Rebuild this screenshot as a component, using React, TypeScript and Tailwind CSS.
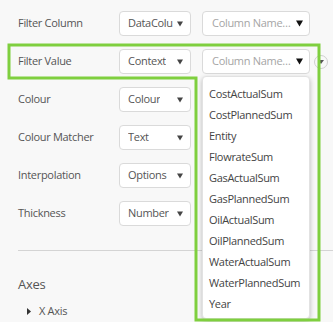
import React from 'react';

const font = { fontFamily: '"Open Sans", "Noto Sans", sans-serif' };

function Caret({ dark }: { dark?: boolean }) {
  return dark ? (
    <svg width="7" height="7" viewBox="0 0 7 7" className="shrink-0">
      <path d="M0 0.5 H7 L3.5 6.5 Z" fill="#111" />
    </svg>
  ) : (
    <svg width="6" height="6" viewBox="0 0 6 6" className="shrink-0">
      <path d="M0 0.5 H6 L3 5.5 Z" fill="#444" />
    </svg>
  );
}

function Select({ value, wide, placeholder }: { value: string; wide?: boolean; placeholder?: boolean }) {
  return (
    <div
      className={`flex h-[25px] items-center justify-between rounded-[4px] border border-[#dadada] bg-white ${
        wide ? 'w-[108px] pl-[9px] pr-[6px]' : 'w-[72px] pl-[8px] pr-[7px]'
      }`}
    >
      <span
        className={`overflow-hidden whitespace-nowrap text-[11px] tracking-[-0.3px] ${
          placeholder ? 'text-[#a5a5a5]' : 'text-[#555]'
        }`}
      >
        {value}
      </span>
      <Caret dark={wide} />
    </div>
  );
}

const rows: { label: string; value: string; second?: boolean }[] = [
  { label: 'Filter Column', value: 'DataColu', second: true },
  { label: 'Filter Value', value: 'Context', second: true },
  { label: 'Colour', value: 'Colour' },
  { label: 'Colour Matcher', value: 'Text' },
  { label: 'Interpolation', value: 'Options' },
  { label: 'Thickness', value: 'Number' },
];

const items = [
  'CostActualSum',
  'CostPlannedSum',
  'Entity',
  'FlowrateSum',
  'GasActualSum',
  'GasPlannedSum',
  'OilActualSum',
  'OilPlannedSum',
  'WaterActualSum',
  'WaterPlannedSum',
  'Year',
];

export default function App() {
  return (
    <div className="relative h-[322px] w-[333px] overflow-hidden bg-[#f8f8f8]" style={font}>
      {/* Property rows */}
      <div className="flex flex-col gap-[13px] pl-[18px] pt-[11px]">
        {rows.map((r, i) => (
          <div key={r.label} className="flex h-[25px] items-center">
            <span className="w-[101px] text-[11px] tracking-[-0.3px] text-[#555]">{r.label}</span>
            <Select value={r.value} />
            {r.second && (
              <div className="ml-[11px]">
                <Select value="Column Name…" wide placeholder />
              </div>
            )}
            {i === 1 && (
              <div className="ml-[4px] flex h-[14px] w-[14px] items-center justify-center rounded-full border border-[#cfcfcf]">
                <svg width="6" height="6" viewBox="0 0 6 6">
                  <path d="M0 1 H6 L3 5 Z" fill="#555" />
                </svg>
              </div>
            )}
          </div>
        ))}
      </div>

      {/* Divider */}
      <div className="ml-[18px] mt-[24px] h-px bg-[#d4d4d4]" />

      {/* Axes */}
      <div className="pl-[18px] pt-[24px] text-[13px] leading-[18px] tracking-[-0.3px] text-[#555]">Axes</div>
      <div className="flex items-center gap-[8px] pl-[27px] pt-[10px] text-[11px] tracking-[-0.3px] text-[#555]">
        <svg width="4" height="7" viewBox="0 0 4 7">
          <path d="M0 0 L4 3.5 L0 7 Z" fill="#333" />
        </svg>
        <span>X Axis</span>
      </div>

      {/* Dropdown menu */}
      <div className="absolute left-[202px] top-[76px] w-[108px] rounded-[4px] border border-[#e2e2e2] bg-white pb-[4px] pt-[6px] shadow-[0_2px_5px_rgba(0,0,0,0.25)]">
        {items.map((it) => (
          <div key={it} className="h-[21px] pl-[6px] text-[11px] leading-[21px] tracking-[-0.3px] text-[#444]">
            {it}
          </div>
        ))}
      </div>

      {/* Highlight outline */}
      <svg className="pointer-events-none absolute inset-0" width="333" height="322">
        <path d="M9 45 H319 V320 H196 V78 H9 Z" fill="none" stroke="#7fcf3f" strokeWidth="3" />
      </svg>
    </div>
  );
}
